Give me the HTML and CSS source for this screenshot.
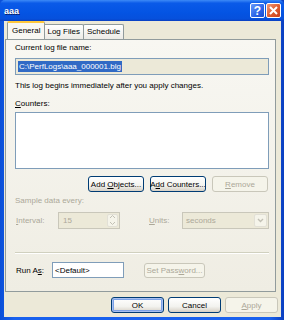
FILE: index.html
```html
<!DOCTYPE html>
<html>

<head>
    <title>aaa</title>
    <link rel="stylesheet" href="styles.css">
</head>

<body>
    <div class="window">
        <div class="titlebar">
            <span class="title">aaa</span>
            <span class="tbtn help">?</span>
            <span class="tbtn close">
                <svg width="9" height="9" viewBox="0 0 9 9"><path d="M1 1L8 8M8 1L1 8" stroke="#fff" stroke-width="2"/></svg>
            </span>
        </div>
        <div class="client">
            <div class="tabs">
                <span class="tab active">General</span>
                <span class="tab">Log Files</span>
                <span class="tab">Schedule</span>
            </div>
            <div class="panel">
                <div class="label">Current log file name:</div>
                <div class="field readonly"><span class="sel">C:\PerfLogs\aaa_000001.blg</span></div>
                <div class="label info">This log begins immediately after you apply changes.</div>
                <div class="label counters"><u>C</u>ounters:</div>
                <div class="listbox"></div>
                <div class="btnrow">
                    <span class="btn"><span>Add <u>O</u>bjects...</span></span>
                    <span class="btn"><span>A<u>d</u>d Counters...</span></span>
                    <span class="btn disabled"><span><u>R</u>emove</span></span>
                </div>
                <div class="label disabledtext sample">Sample data every:</div>
                <div class="introw">
                    <span class="disabledtext"><u>I</u>nterval:</span>
                    <span class="spin"><span>15</span><span class="spinbtn"><svg width="7" height="12" viewBox="0 0 7 12"><path d="M1 4L3.5 1.5L6 4M1 8L3.5 10.5L6 8" stroke="#C2C0B5" fill="none"/></svg></span></span>
                    <span class="disabledtext units"><u>U</u>nits:</span>
                    <span class="combo"><span>seconds</span><span class="drop"><svg width="7" height="5" viewBox="0 0 7 5"><path d="M1 1L3.5 3.5L6 1" stroke="#C2C0B5" fill="none" stroke-width="1.4"/></svg></span></span>
                </div>
                <div class="sep"></div>
                <div class="runrow">
                    <span>Run A<u>s</u>:</span>
                    <span class="field runas">&lt;Default&gt;</span>
                    <span class="btn disabled pwd"><span>Set Pass<u>w</u>ord...</span></span>
                </div>
            </div>
            <div class="footer">
                <span class="btn focus">OK</span>
                <span class="btn">Cancel</span>
                <span class="btn disabled"><span><u>A</u>pply</span></span>
            </div>
        </div>
    </div>
</body>

</html>
```

FILE: styles.css
```css
body {
    margin: 0;
    font-family: "Liberation Sans", Arial, sans-serif;
    font-size: 8px;
    color: #000;
}

u {
    text-decoration: underline;
}

.window {
    width: 284px;
    height: 320px;
    box-sizing: border-box;
    display: flex;
    flex-direction: column;
    background: linear-gradient(to right, #0A4FD8, #1961EE 5%, #1961EE 95%, #0A3FC0);
    padding: 0 3px 3px 4px;
}

.titlebar {
    height: 21px;
    display: flex;
    align-items: center;
    margin: 0 -3px 0 -4px;
    padding: 0 3px 0 4px;
    background: linear-gradient(to bottom, #3D8AF7, #0A5AE8 15%, #0454E3 60%, #0650DC 90%, #0A3FC0);
    border-radius: 5px 5px 0 0;
}

.title {
    flex: 1;
    color: #fff;
    font-weight: bold;
    font-size: 9px;
    text-shadow: 1px 1px #0A1E6E;
}

.tbtn {
    width: 15px;
    height: 15px;
    box-sizing: border-box;
    border: 1px solid #fff;
    border-radius: 2px;
    display: flex;
    align-items: center;
    justify-content: center;
    color: #fff;
    font-weight: bold;
    font-size: 12px;
    margin-left: 1px;
}

.help {
    background: linear-gradient(135deg, #6A9BFA, #2A63E8 60%, #1A4CCB);
}

.close {
    background: linear-gradient(135deg, #F09A7A, #DD5A2E 55%, #C7401C);
}

.client {
    flex: 1;
    background: #ECE9D8;
    padding: 2px 1px 0 1px;
    display: flex;
    flex-direction: column;
}

.tabs {
    display: flex;
    align-items: flex-end;
    height: 16px;
    padding-left: 2px;
    position: relative;
    z-index: 1;
}

.tab {
    height: 14px;
    line-height: 13px;
    padding: 0 3px;
    border: 1px solid #919B9C;
    border-bottom: none;
    border-radius: 2px 2px 0 0;
    background: linear-gradient(#FFFFFF, #ECEBE6);
    margin-left: -1px;
    font-size: 8px;
}

.tab.active {
    height: 16px;
    line-height: 15px;
    background: #F8F7F2;
    border-top: 2px solid #FFC83C;
    padding: 0 4px;
    margin-right: -1px;
    margin-left: 0;
    z-index: 2;
    position: relative;
}

.panel {
    width: 271px;
    height: 253px;
    box-sizing: border-box;
    border: 1px solid #919B9C;
    background: linear-gradient(#F8F7F2, #EFEDE3);
    padding: 3px 6px 0 9px;
    display: flex;
    flex-direction: column;
}

.label {
    line-height: 10px;
}

.field {
    box-sizing: border-box;
    border: 1px solid #7F9DB9;
    background: #fff;
    height: 17px;
    display: flex;
    align-items: center;
    padding-left: 2px;
}

.readonly {
    margin-top: 5px;
    background: #ECE9D8;
}

.sel {
    background: #316AC5;
    color: #fff;
    line-height: 11px;
    padding: 0 1px;
}

.info {
    margin-top: 6px;
}

.counters {
    margin-top: 8px;
}

.listbox {
    margin-top: 3px;
    height: 55px;
    border: 1px solid #7F9DB9;
    background: #fff;
}

.btnrow {
    display: flex;
    justify-content: flex-end;
    gap: 6px;
    margin-top: 7px;
    padding-right: 1px;
}

.btn {
    box-sizing: border-box;
    width: 56px;
    height: 16px;
    border: 1px solid #003C74;
    border-radius: 3px;
    background: linear-gradient(#FFFFFF, #F3F3EF 60%, #D6D0C5);
    display: flex;
    align-items: center;
    justify-content: center;
    white-space: nowrap;
}

.btn.disabled {
    border-color: #C9C7BA;
    background: #F5F4EA;
    color: #ACA899;
}

.btn.focus {
    box-shadow: inset 0 0 0 1px #A7C0F1, inset 0 0 0 2px #7BA2E7;
}

.disabledtext {
    color: #ACA899;
}

.sample {
    margin-top: 4px;
}

.introw {
    display: flex;
    align-items: center;
    margin-top: 5px;
    height: 18px;
}

.introw > .disabledtext:first-child {
    width: 42px;
    padding-left: 1px;
}

.spin {
    box-sizing: border-box;
    width: 62px;
    height: 17px;
    border: 1px solid #C9C7BA;
    display: flex;
    align-items: center;
    justify-content: space-between;
    padding: 0 1px 0 4px;
    color: #ACA899;
    background: #ECE9D8;
}

.spinbtn,
.drop {
    box-sizing: border-box;
    height: 13px;
    width: 11px;
    border: 1px solid #E2E0D6;
    border-radius: 2px;
    background: #F5F4EA;
    display: flex;
    align-items: center;
    justify-content: center;
}

.units {
    margin-left: 29px;
    width: 33px;
}

.combo {
    box-sizing: border-box;
    width: 87px;
    height: 17px;
    border: 1px solid #C9C7BA;
    display: flex;
    align-items: center;
    justify-content: space-between;
    padding: 0 1px 0 3px;
    color: #ACA899;
    background: #ECE9D8;
}

.drop {
    width: 13px;
}

.sep {
    margin-top: 23px;
    border-top: 1px solid #D0D0BF;
    border-bottom: 1px solid #fff;
}

.runrow {
    display: flex;
    align-items: center;
    margin-top: 8px;
    padding-left: 1px;
}

.runrow > span:first-child {
    width: 36px;
}

.runas {
    width: 72px;
    height: 16px;
}

.pwd {
    margin-left: 20px;
    width: 61px;
    height: 15px;
}

.footer {
    display: flex;
    justify-content: flex-end;
    gap: 4px;
    padding: 5px 2px 0 0;
}

.footer .btn {
    width: 53px;
    height: 16px;
}
```
